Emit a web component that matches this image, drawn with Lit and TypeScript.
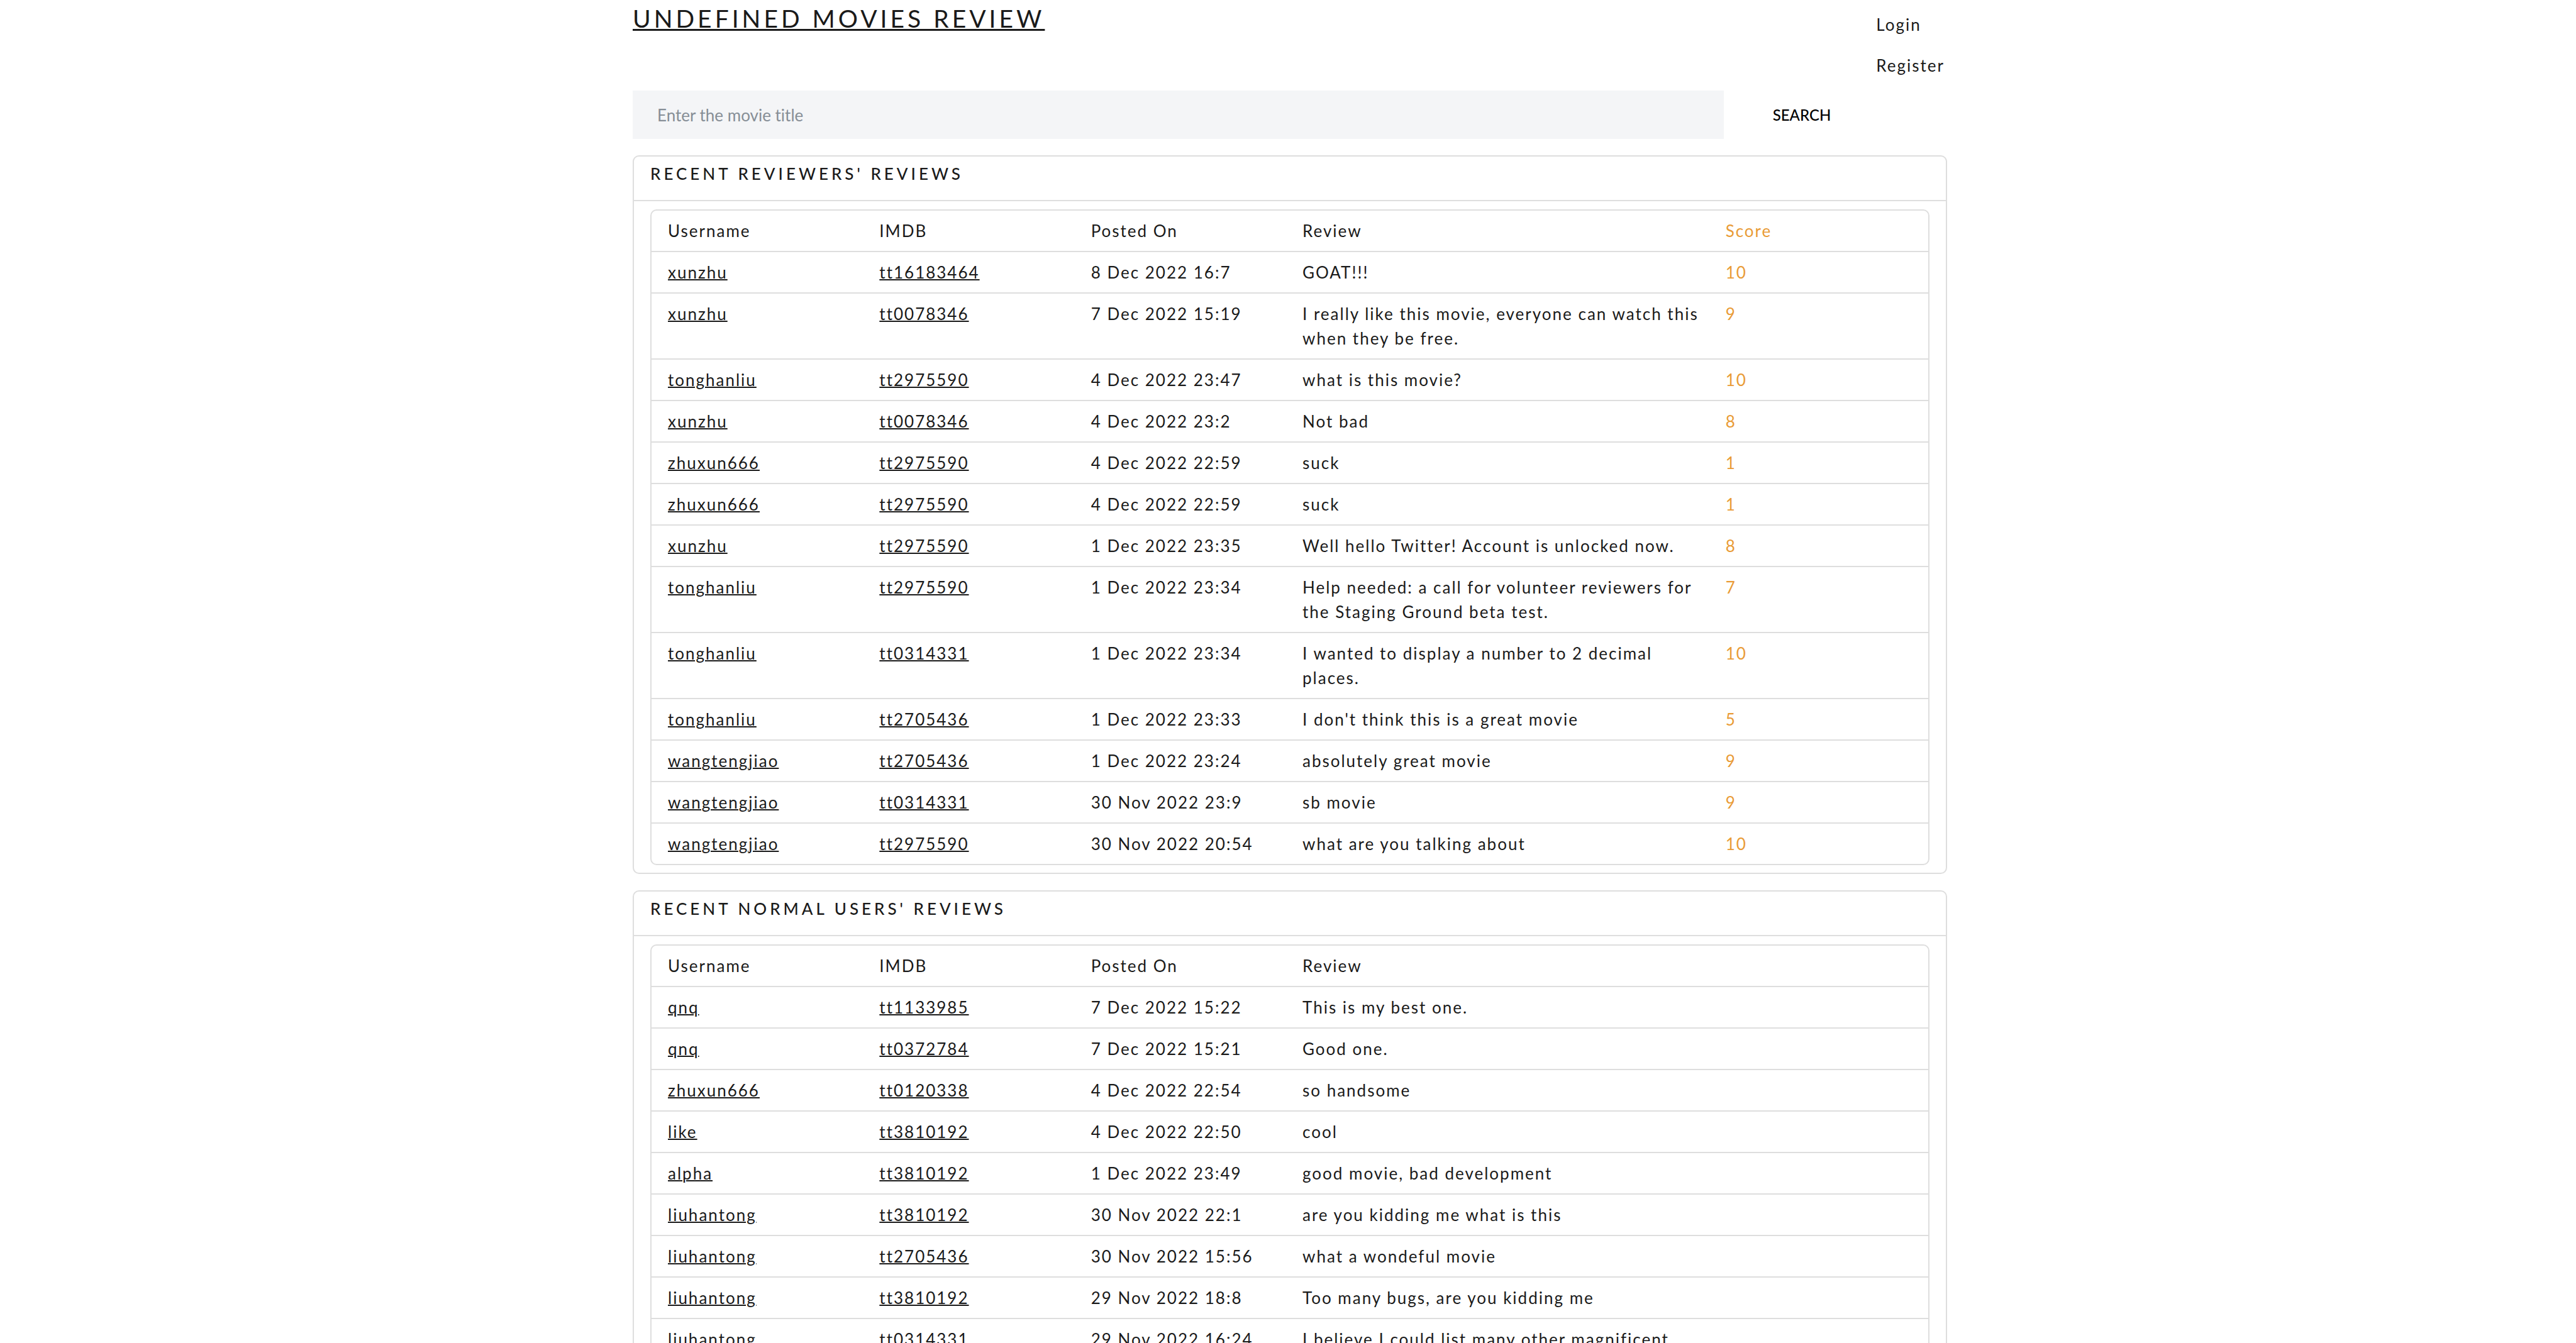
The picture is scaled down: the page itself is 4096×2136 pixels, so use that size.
import { LitElement, html, css, nothing } from "lit";
import { customElement, property } from "lit/decorators.js";

interface Review {
  user: string;
  imdb: string;
  posted: string;
  text: string;
  score?: number;
}

const REVIEWER_REVIEWS: Review[] = [
  { user: "xunzhu", imdb: "tt16183464", posted: "8 Dec 2022 16:7", text: "GOAT!!!", score: 10 },
  { user: "xunzhu", imdb: "tt0078346", posted: "7 Dec 2022 15:19", text: "I really like this movie, everyone can watch this when they be free.", score: 9 },
  { user: "tonghanliu", imdb: "tt2975590", posted: "4 Dec 2022 23:47", text: "what is this movie?", score: 10 },
  { user: "xunzhu", imdb: "tt0078346", posted: "4 Dec 2022 23:2", text: "Not bad", score: 8 },
  { user: "zhuxun666", imdb: "tt2975590", posted: "4 Dec 2022 22:59", text: "suck", score: 1 },
  { user: "zhuxun666", imdb: "tt2975590", posted: "4 Dec 2022 22:59", text: "suck", score: 1 },
  { user: "xunzhu", imdb: "tt2975590", posted: "1 Dec 2022 23:35", text: "Well hello Twitter! Account is unlocked now.", score: 8 },
  { user: "tonghanliu", imdb: "tt2975590", posted: "1 Dec 2022 23:34", text: "Help needed: a call for volunteer reviewers for the Staging Ground beta test.", score: 7 },
  { user: "tonghanliu", imdb: "tt0314331", posted: "1 Dec 2022 23:34", text: "I wanted to display a number to 2 decimal places.", score: 10 },
  { user: "tonghanliu", imdb: "tt2705436", posted: "1 Dec 2022 23:33", text: "I don't think this is a great movie", score: 5 },
  { user: "wangtengjiao", imdb: "tt2705436", posted: "1 Dec 2022 23:24", text: "absolutely great movie", score: 9 },
  { user: "wangtengjiao", imdb: "tt0314331", posted: "30 Nov 2022 23:9", text: "sb movie", score: 9 },
  { user: "wangtengjiao", imdb: "tt2975590", posted: "30 Nov 2022 20:54", text: "what are you talking about", score: 10 },
];

const USER_REVIEWS: Review[] = [
  { user: "qnq", imdb: "tt1133985", posted: "7 Dec 2022 15:22", text: "This is my best one." },
  { user: "qnq", imdb: "tt0372784", posted: "7 Dec 2022 15:21", text: "Good one." },
  { user: "zhuxun666", imdb: "tt0120338", posted: "4 Dec 2022 22:54", text: "so handsome" },
  { user: "like", imdb: "tt3810192", posted: "4 Dec 2022 22:50", text: "cool" },
  { user: "alpha", imdb: "tt3810192", posted: "1 Dec 2022 23:49", text: "good movie, bad development" },
  { user: "liuhantong", imdb: "tt3810192", posted: "30 Nov 2022 22:1", text: "are you kidding me what is this" },
  { user: "liuhantong", imdb: "tt2705436", posted: "30 Nov 2022 15:56", text: "what a wondeful movie" },
  { user: "liuhantong", imdb: "tt3810192", posted: "29 Nov 2022 18:8", text: "Too many bugs, are you kidding me" },
  { user: "liuhantong", imdb: "tt0314331", posted: "29 Nov 2022 16:24", text: "I believe I could list many other magnificent" },
];

@customElement("review-card")
export class ReviewCard extends LitElement {
  @property() heading = "";
  @property({ attribute: false }) reviews: Review[] = [];
  @property({ type: Boolean }) scored = false;

  static styles = css`
    :host {
      display: block;
      border: 2px solid #dedede;
      border-radius: 10px;
    }
    .heading {
      margin: 0;
      padding: 8px 26px 23px;
      border-bottom: 2px solid #dedede;
      font-size: 26px;
      line-height: 38px;
      font-weight: 500;
      letter-spacing: 5px;
      text-transform: uppercase;
    }
    .body {
      padding: 13px 26px 12px;
    }
    .table {
      display: block;
      border: 2px solid #dedede;
      border-radius: 10px;
    }
    .head,
    .rows {
      display: block;
    }
    .row {
      display: grid;
      grid-template-columns: 2fr 2fr 2fr 4fr 2fr;
      padding: 0 6px;
      border-bottom: 2px solid #dedede;
    }
    .rows .row:last-child {
      border-bottom: none;
    }
    .cell {
      padding: 13px 20px 12px;
      font-weight: 400;
      text-align: left;
    }
    .score {
      color: #e99b36;
    }
    .link {
      color: inherit;
      text-decoration-thickness: 2px;
    }
  `;

  render() {
    return html`
      <h2 class="heading">${this.heading}</h2>
      <div class="body">
        <table class="table" aria-label=${this.heading}>
          <thead class="head">
            <tr class="row">
              <th class="cell" scope="col">Username</th>
              <th class="cell" scope="col">IMDB</th>
              <th class="cell" scope="col">Posted On</th>
              <th class="cell" scope="col">Review</th>
              ${this.scored ? html`<th class="cell score" scope="col">Score</th>` : nothing}
            </tr>
          </thead>
          <tbody class="rows">
            ${this.reviews.map(
              (r) => html`<tr class="row">
                <td class="cell"><a class="link" href="#user">${r.user}</a></td>
                <td class="cell"><a class="link" href="#movie">${r.imdb}</a></td>
                <td class="cell">${r.posted}</td>
                <td class="cell">${r.text}</td>
                ${this.scored ? html`<td class="cell score">${r.score}</td>` : nothing}
              </tr>`
            )}
          </tbody>
        </table>
      </div>
    `;
  }
}

@customElement("app-root")
export class AppRoot extends LitElement {
  static styles = css`
    :host {
      display: block;
      height: 100vh;
      overflow: hidden;
      background: #fff;
      color: #1a1a1a;
      font-family: Lato, "Open Sans", sans-serif;
      font-size: 26px;
      line-height: 39px;
      letter-spacing: 2px;
    }
    .container {
      box-sizing: border-box;
      max-width: 2096px;
      margin: 0 auto;
      padding-left: 6px;
    }
    .header {
      display: flex;
      justify-content: space-between;
      align-items: flex-start;
    }
    .title {
      margin: 0;
      padding-top: 4px;
      font-size: 39px;
      line-height: 50px;
      font-weight: 400;
      letter-spacing: 5px;
      text-transform: uppercase;
    }
    .home {
      color: inherit;
      text-decoration-thickness: 3px;
    }
    .nav {
      display: flex;
      flex-direction: column;
      padding: 7px 4px 7px 0;
    }
    .nav-link {
      padding: 13px 0;
      color: inherit;
      text-decoration: none;
    }
    .search {
      display: flex;
      margin-bottom: 26px;
    }
    .field {
      box-sizing: border-box;
      width: 83%;
      height: 77px;
      padding: 0 39px;
      border: none;
      border-radius: 0;
      background: #f4f5f7;
      color: inherit;
      font-family: inherit;
      font-size: 26px;
      font-variant-ligatures: none;
    }
    .field::placeholder {
      color: #868e96;
      opacity: 1;
    }
    .submit {
      padding: 0 78px;
      border: none;
      background: none;
      color: #000;
      font-family: inherit;
      font-size: 24px;
      font-weight: 500;
      text-transform: uppercase;
    }
    .cards {
      display: grid;
      gap: 26px;
    }
  `;

  render() {
    return html`
      <div class="container">
        <header class="header">
          <h1 class="title"><a class="home" href="#home">Undefined Movies Review</a></h1>
          <nav class="nav">
            <a class="nav-link" href="#login">Login</a>
            <a class="nav-link" href="#register">Register</a>
          </nav>
        </header>
        <form class="search" @submit=${(e: Event) => e.preventDefault()}>
          <input class="field" type="text" aria-label="Movie title" placeholder="Enter the movie title" />
          <button class="submit" type="submit">Search</button>
        </form>
        <main class="cards">
          <review-card heading="Recent Reviewers' Reviews" scored .reviews=${REVIEWER_REVIEWS}></review-card>
          <review-card heading="Recent Normal Users' Reviews" .reviews=${USER_REVIEWS}></review-card>
        </main>
      </div>
    `;
  }
}
